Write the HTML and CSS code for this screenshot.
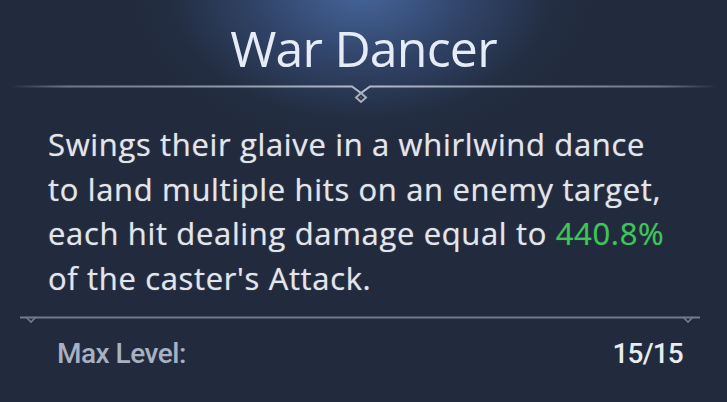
FILE: index.html
```html
<!DOCTYPE html>
<html>
<head>
<meta charset="utf-8">
<link rel="stylesheet" href="styles.css">
</head>
<body>
<div class="card">
  <h1 class="title">War Dancer</h1>
  <div class="divider-top">
    <svg width="727" height="20" viewBox="0 0 727 20">
      <defs>
        <linearGradient id="lg" x1="0" x2="1" y1="0" y2="0">
          <stop offset="0" stop-color="#8e98ab" stop-opacity="0"/>
          <stop offset="0.08" stop-color="#8e98ab" stop-opacity="0.7"/>
          <stop offset="0.5" stop-color="#b4bccb" stop-opacity="1"/>
          <stop offset="0.92" stop-color="#8e98ab" stop-opacity="0.7"/>
          <stop offset="1" stop-color="#8e98ab" stop-opacity="0"/>
        </linearGradient>
      </defs>
      <path d="M10 1.5 H352 L361 8 L370 1.5 H717" fill="none" stroke="url(#lg)" stroke-width="2"/>
      <path d="M361 8 L366 12.5 L361 17 L356 12.5 Z" fill="none" stroke="#a8b0bf" stroke-width="2"/>
      <circle cx="361" cy="12.5" r="1" fill="#8a4a55"/>
    </svg>
  </div>
  <p class="desc">Swings their glaive in a whirlwind dance<br>to land multiple hits on an enemy target,<br>each hit dealing damage equal to <span class="hl">440.8%</span><br>of the caster's Attack.</p>
  <div class="divider-bottom">
    <svg width="727" height="10" viewBox="0 0 727 10">
      <path d="M20 1.5 H700" fill="none" stroke="#6f7b90" stroke-width="2"/>
      <path d="M26 1 L31 6 L36 1" fill="none" stroke="#6f7b90" stroke-width="1.6"/>
      <path d="M683 1 L688 6 L693 1" fill="none" stroke="#6f7b90" stroke-width="1.6"/>
    </svg>
  </div>
  <div class="footer">
    <span class="label">Max Level:</span>
    <span class="value">15/15</span>
  </div>
</div>
</body>
</html>
```
FILE: styles.css
```css
html, body {
  margin: 0;
  padding: 0;
}
body {
  width: 727px;
  height: 402px;
  overflow: hidden;
  background: #222b3d;
}
.card {
  width: 727px;
  height: 402px;
  background:
    radial-gradient(ellipse 240px 160px at 362px -10px, rgba(72, 104, 160, 0.95) 0%, rgba(58, 84, 132, 0.6) 45%, rgba(40, 56, 88, 0.2) 80%, rgba(34, 43, 61, 0) 100%),
    #222b3d;
  display: flex;
  flex-direction: column;
}
.title {
  margin: 18px 0 0;
  font-family: "Open Sans", sans-serif;
  font-weight: 400;
  font-size: 50px;
  line-height: 60px;
  text-align: center;
  color: #e6ecf7;
  letter-spacing: -0.8px;
}
.divider-top {
  height: 20px;
  margin-top: 7px;
}
.divider-top svg, .divider-bottom svg {
  display: block;
}
.desc {
  margin: 17px 0 0;
  padding-left: 48px;
  font-family: "Open Sans", sans-serif;
  font-weight: 400;
  font-size: 31px;
  line-height: 44.5px;
  letter-spacing: 0.65px;
  color: #e2e5ea;
  text-shadow: 0 0 1px rgba(226, 229, 234, 0.6);
}
.hl {
  color: #3fc45c;
  text-shadow: 0 0 1px rgba(63, 196, 92, 0.6);
}
.divider-bottom {
  height: 10px;
  margin-top: 16px;
}
.footer {
  display: flex;
  justify-content: space-between;
  padding: 0 44px 0 57px;
  margin-top: 12px;
  font-family: Roboto, sans-serif;
  font-weight: 500;
  font-size: 28px;
  line-height: 32px;
}
.label {
  color: #a7b1c1;
  letter-spacing: -0.5px;
}
.value {
  color: #e9ebef;
  letter-spacing: -0.8px;
}
```
